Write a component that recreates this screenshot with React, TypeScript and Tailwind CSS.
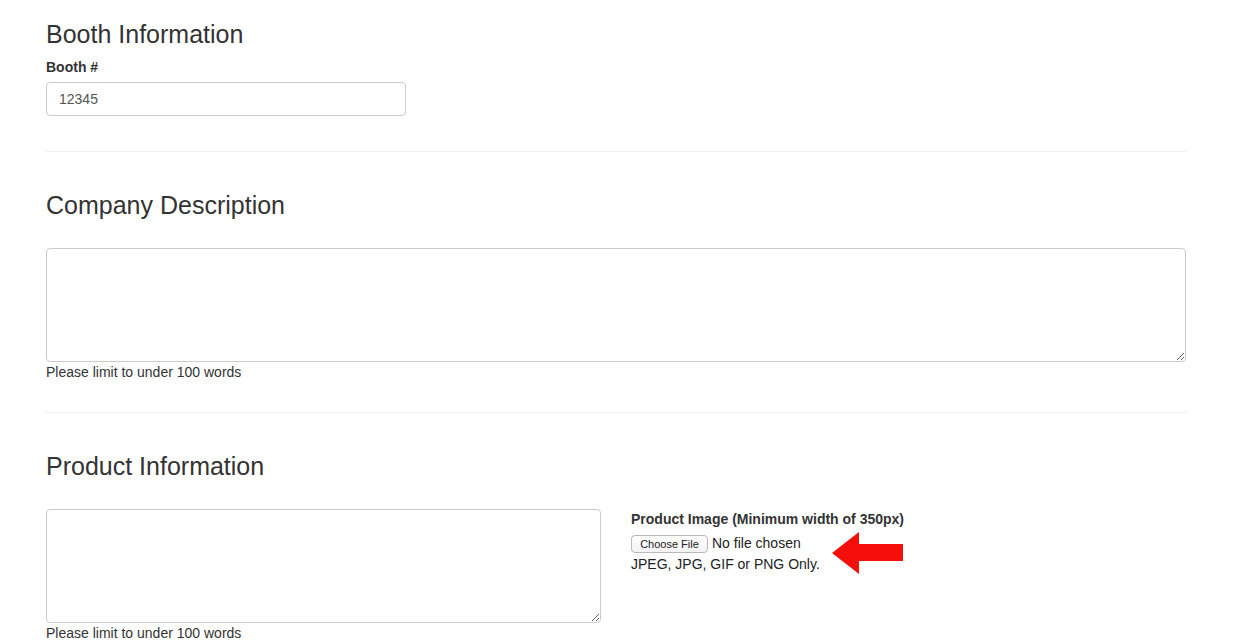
import React from "react";

const font = { fontFamily: '"Liberation Sans", Arial, Helvetica, sans-serif' };

const Heading = ({ children }: { children: React.ReactNode }) => (
  <h3 className="mt-[20px] mb-[9px] text-[25px] leading-[27px] font-normal text-[#333]">
    {children}
  </h3>
);

const HelpText = () => (
  <p className="text-[14px] leading-[20px] text-[#333]">Please limit to under 100 words</p>
);

const Divider = () => <hr className="my-[20px] border-0 border-t border-[#eee]" />;

export default function App() {
  return (
    <div className="bg-white text-[#333]" style={font}>
      <div className="flex flex-col w-[1140px] ml-[46px] pt-px">
        {/* Booth */}
        <Heading>Booth Information</Heading>
        <label className="block mb-[5px] text-[14px] leading-[20px] font-bold">Booth #</label>
        <input
          type="text"
          defaultValue="12345"
          className="block w-[360px] h-[34px] px-[12px] rounded-[4px] border border-[#ccc] text-[14px] text-[#555] outline-none"
        />
        <div className="h-[15px]" />
        <Divider />

        {/* Company */}
        <Heading>Company Description</Heading>
        <textarea className="block mt-[20px] w-full h-[114px] rounded-[4px] border border-[#ccc] outline-none" />
        <HelpText />
        <div className="h-[10px]" />
        <Divider />

        {/* Product */}
        <Heading>Product Information</Heading>
        <div className="mt-[20px] grid grid-cols-2 gap-[30px]">
          <div>
            <textarea className="block w-full h-[114px] rounded-[4px] border border-[#ccc] outline-none" />
            <HelpText />
          </div>
          <div className="relative">
            <label className="block text-[14px] leading-[20px] font-bold">
              Product Image (Minimum width of 350px)
            </label>
            <div className="mt-[4px] flex items-center gap-[4px] h-[20px]">
              <button className="mt-[2px] h-[18px] w-[77px] rounded-[4px] border border-[#b9b9b9] bg-gradient-to-b from-white to-[#f3f3f3] text-[11px] leading-[16px] text-[#222]">
                Choose File
              </button>
              <span className="text-[14px] leading-[20px] text-[#222]">No file chosen</span>
            </div>
            <p className="mt-px text-[14px] leading-[20px] text-[#222]">JPEG, JPG, GIF or PNG Only.</p>
            <svg
              className="absolute left-[200px] top-[23px]"
              width="72"
              height="44"
              viewBox="0 0 72 44"
            >
              <polygon points="1,21 28,0 28,12 72,12 72,29 28,29 28,42" fill="#f50f0a" />
            </svg>
          </div>
        </div>
      </div>
    </div>
  );
}
